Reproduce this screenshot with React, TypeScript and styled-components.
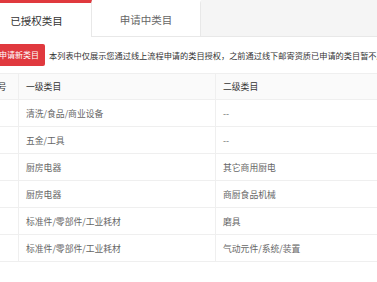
import styled, { createGlobalStyle } from "styled-components";

const GlobalStyle = createGlobalStyle`
  html, body {
    margin: 0;
    padding: 0;
    background: #fff;
    overflow: hidden;
  }
  body {
    font-family: "Noto Sans CJK SC", "Noto Sans", sans-serif;
    color: #333;
  }
`;

interface Category {
  first: string;
  second: string;
}

const rows: Category[] = [
  { first: "清洗/食品/商业设备", second: "--" },
  { first: "五金/工具", second: "--" },
  { first: "厨房电器", second: "其它商用厨电" },
  { first: "厨房电器", second: "商厨食品机械" },
  { first: "标准件/零部件/工业耗材", second: "磨具" },
  { first: "标准件/零部件/工业耗材", second: "气动元件/系统/装置" },
];

// the shot is cropped: the page starts a bit left of the viewport
const Page = styled.div`
  width: 640px;
  margin-left: -18px;
`;

const TabBar = styled.div`
  display: flex;
  height: 36px;
  background: #f5f5f5;
  border-bottom: 1px solid #e8e8e8;
`;

const Tab = styled.div<{ $active?: boolean }>`
  box-sizing: border-box;
  width: ${(p) => (p.$active ? "110px" : "109px")};
  height: ${(p) => (p.$active ? "37px" : "36px")};
  display: flex;
  align-items: center;
  justify-content: center;
  background: #fff;
  border-right: 1px solid #e8e8e8;
  border-top: 3px solid ${(p) => (p.$active ? "#e0393e" : "transparent")};
  font-size: 10.5px;
  color: ${(p) => (p.$active ? "#333" : "#666")};
`;

const Toolbar = styled.div`
  display: flex;
  align-items: center;
  gap: 4px;
  padding: 7px 0 7px 11px;
  white-space: nowrap;
`;

const AddButton = styled.div`
  height: 22px;
  line-height: 22px;
  padding: 0 6px;
  background: #e0393e;
  color: #fff;
  font-size: 8px;
  border-radius: 2px;
`;

const Notice = styled.span`
  font-size: 8.2px;
  color: #333;
`;

const Row = styled.div<{ $head?: boolean }>`
  display: grid;
  grid-template-columns: 36px 197px 1fr;
  height: 27px;
  box-sizing: border-box;
  border-bottom: 1px solid #efefef;
  border-top: ${(p) => (p.$head ? "1px solid #efefef" : "none")};
  background: ${(p) => (p.$head ? "#fafafa" : "#fff")};
  font-size: 8.8px;
  color: ${(p) => (p.$head ? "#333" : "#666")};
`;

const Cell = styled.div`
  display: flex;
  align-items: center;
  padding: 0 7px;
  white-space: nowrap;
  & + & {
    border-left: 1px solid #efefef;
  }
`;

export default function App() {
  return (
    <>
      <GlobalStyle />
      <Page>
        <TabBar>
          <Tab $active>已授权类目</Tab>
          <Tab>申请中类目</Tab>
        </TabBar>
        <Toolbar>
          <AddButton>申请新类目</AddButton>
          <Notice>
            本列表中仅展示您通过线上流程申请的类目授权，之前通过线下邮寄资质已申请的类目暂不展示
          </Notice>
        </Toolbar>
        <div>
          <Row $head>
            <Cell>序号</Cell>
            <Cell>一级类目</Cell>
            <Cell>二级类目</Cell>
          </Row>
          {rows.map((r, i) => (
            <Row key={i}>
              <Cell>{i + 1}</Cell>
              <Cell>{r.first}</Cell>
              <Cell>{r.second}</Cell>
            </Row>
          ))}
        </div>
      </Page>
    </>
  );
}
